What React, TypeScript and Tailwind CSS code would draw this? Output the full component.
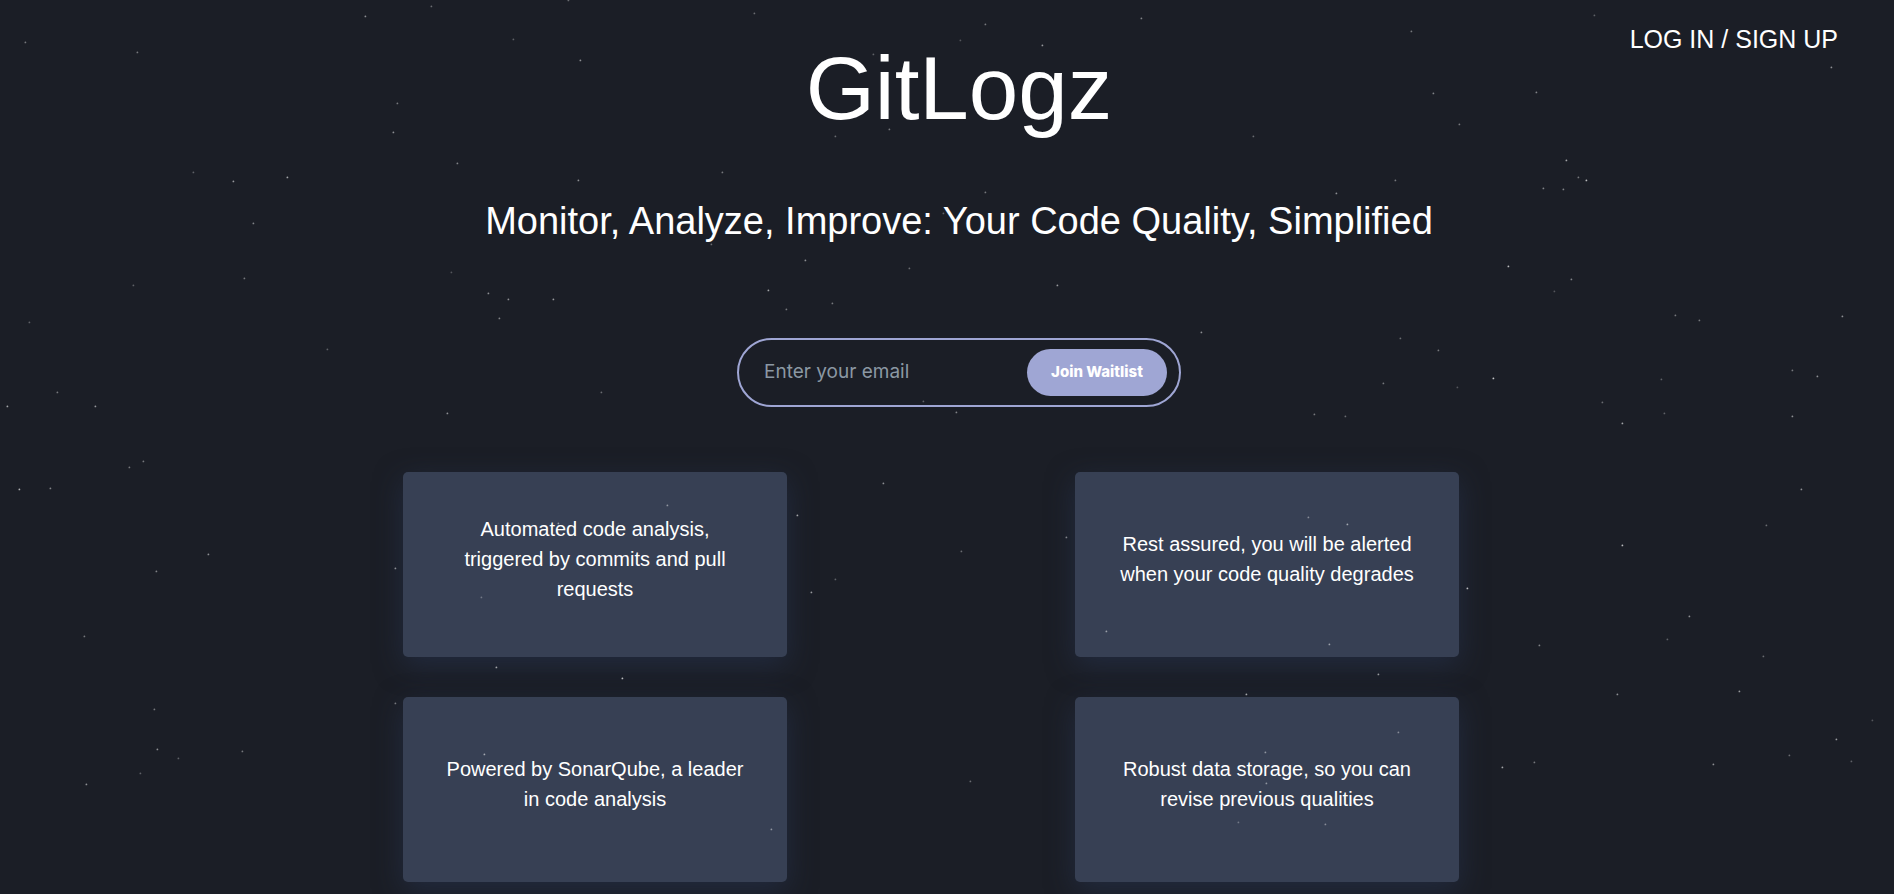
import React from "react";

// [x, y, opacity] of every particle in the background field
const stars: [number, number, number][] = [
  [25, 42, 0.4], [137, 52, 0.4], [365, 16, 0.5], [431, 6, 0.35], [568, 0, 0.35], [513, 39, 0.3], [580, 60, 0.5],
  [397, 103, 0.4], [393, 132, 0.5], [457, 163, 0.45], [193, 172, 0.3], [233, 181, 0.55], [287, 177, 0.6],
  [578, 180, 0.5], [253, 223, 0.45], [244, 278, 0.4], [133, 285, 0.3], [451, 272, 0.25], [488, 293, 0.5],
  [508, 299, 0.5], [553, 299, 0.55], [499, 318, 0.45], [29, 322, 0.3], [327, 349, 0.3], [57, 392, 0.4],
  [7, 406, 0.6], [95, 406, 0.55], [447, 413, 0.5], [601, 392, 0.35],
  [754, 13, 0.35], [985, 24, 0.4], [1141, 18, 0.45], [960, 40, 0.25], [1042, 45, 0.55], [873, 54, 0.3],
  [889, 129, 0.4], [835, 136, 0.35], [1253, 136, 0.35], [722, 172, 0.4], [985, 192, 0.4], [943, 213, 0.3],
  [711, 244, 0.35], [805, 260, 0.5], [909, 268, 0.35], [1057, 285, 0.55], [768, 290, 0.6], [832, 303, 0.4],
  [786, 309, 0.4], [1201, 332, 0.5], [923, 401, 0.3], [956, 412, 0.45],
  [1594, 15, 0.3], [1411, 31, 0.4], [1831, 67, 0.5], [1433, 93, 0.45], [1536, 92, 0.45], [1459, 124, 0.4],
  [1566, 160, 0.6], [1578, 177, 0.4], [1586, 180, 0.7], [1543, 188, 0.45], [1563, 189, 0.45], [1395, 180, 0.4],
  [1336, 193, 0.5], [1296, 216, 0.3], [1508, 266, 0.7], [1571, 279, 0.45], [1554, 291, 0.25], [1675, 315, 0.4],
  [1699, 320, 0.4], [1842, 316, 0.5], [1400, 338, 0.35], [1438, 350, 0.4], [1383, 383, 0.4], [1457, 387, 0.25],
  [1493, 378, 0.75], [1661, 379, 0.3], [1792, 370, 0.4], [1817, 376, 0.5], [1602, 402, 0.35], [1622, 423, 0.6],
  [1664, 413, 0.3], [1792, 416, 0.5], [1314, 414, 0.4], [1345, 416, 0.35],
  [143, 461, 0.4], [129, 467, 0.4], [19, 489, 0.65], [50, 488, 0.45], [208, 554, 0.5], [156, 571, 0.45],
  [395, 568, 0.5], [481, 597, 0.3], [558, 523, 0.45], [84, 636, 0.4], [496, 667, 0.6], [622, 678, 0.7],
  [395, 703, 0.4], [154, 709, 0.4], [157, 749, 0.5], [242, 751, 0.4], [178, 758, 0.3], [140, 773, 0.3],
  [86, 784, 0.5], [484, 754, 0.55],
  [883, 483, 0.5], [667, 505, 0.45], [797, 515, 0.6], [961, 551, 0.35], [1066, 537, 0.45], [835, 579, 0.3],
  [811, 592, 0.55], [1106, 631, 0.5], [1246, 694, 0.6], [970, 781, 0.35], [771, 829, 0.45], [1238, 822, 0.3],
  [1265, 752, 0.45], [1266, 783, 0.45],
  [1308, 517, 0.4], [1347, 524, 0.55], [1801, 489, 0.5], [1766, 525, 0.35], [1622, 545, 0.7], [1467, 588, 0.7],
  [1329, 644, 0.5], [1378, 674, 0.55], [1539, 645, 0.45], [1689, 616, 0.5], [1667, 639, 0.3], [1763, 656, 0.35],
  [1617, 694, 0.5], [1739, 691, 0.55], [1872, 720, 0.25], [1836, 739, 0.55], [1789, 755, 0.35], [1851, 761, 0.3],
  [1713, 764, 0.5], [1534, 762, 0.4], [1502, 767, 0.6], [1398, 732, 0.4], [1325, 824, 0.4],
];

const features = [
  "Automated code analysis, triggered by commits and pull requests",
  "Rest assured, you will be alerted when your code quality degrades",
  "Powered by SonarQube, a leader in code analysis",
  "Robust data storage, so you can revise previous qualities",
];

function StarField() {
  return (
    <svg className="pointer-events-none absolute inset-0 h-full w-full" aria-hidden="true">
      {stars.map(([x, y, opacity]) => (
        <circle key={`${x}-${y}`} cx={x + 0.4} cy={y + 0.4} r={0.9} fill="#fff" opacity={opacity} />
      ))}
    </svg>
  );
}

function WaitlistForm() {
  return (
    <form
      onSubmit={(event) => event.preventDefault()}
      className="mt-[95px] flex h-[69px] w-[444px] items-center justify-between rounded-full border-2 border-[#9fa6d4] pr-3 pl-[25px] font-['Inter',sans-serif]"
    >
      <input
        type="email"
        aria-label="Email"
        placeholder="Enter your email"
        className="min-w-0 flex-1 bg-transparent text-[19px] text-white outline-none placeholder:text-[#8b98a3]"
      />
      <button type="submit" className="h-[47px] w-[140px] rounded-full bg-[#9fa6d4] text-[15px] font-extrabold text-white">
        Join Waitlist
      </button>
    </form>
  );
}

export default function App() {
  return (
    <div className="relative min-h-screen overflow-hidden bg-[#1b1e26] pb-3 font-['Liberation_Sans',Arial,sans-serif] text-white">
      <a href="#login" className="absolute top-6 right-14 text-[25px] leading-[30px]">
        LOG IN / SIGN UP
      </a>
      <main className="flex flex-col items-center pt-[38px] pl-6">
        <h1 className="text-[89px] leading-[100px]">GitLogz</h1>
        <h2 className="mt-[61px] text-[38px] leading-[44px]">Monitor, Analyze, Improve: Your Code Quality, Simplified</h2>
        <WaitlistForm />
        <div className="mt-[65px] mr-14 grid grid-cols-2 gap-x-72 gap-y-10">
          {features.map((text) => (
            <section
              key={text}
              className="flex h-[185px] w-96 items-center justify-center rounded-[5px] bg-[#374054] px-9 pb-3 text-center text-[20px] leading-[30px] shadow-[0_8px_28px_0_rgba(42,56,88,0.5)]"
            >
              <p>{text}</p>
            </section>
          ))}
        </div>
      </main>
      <StarField />
    </div>
  );
}
